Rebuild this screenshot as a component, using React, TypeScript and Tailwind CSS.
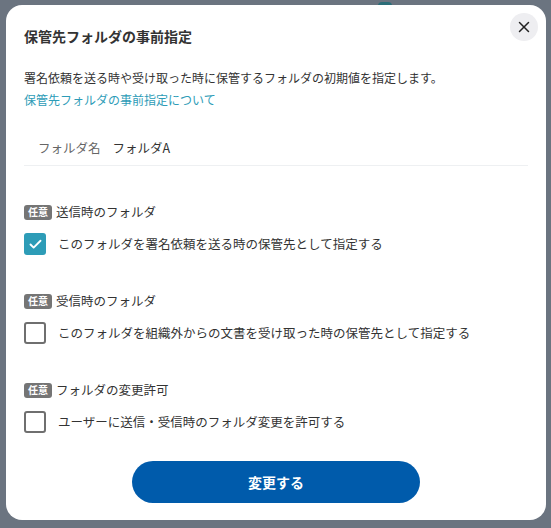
import { X, Check } from "lucide-react";

const font = { fontFamily: '"Noto Sans CJK JP", "Noto Sans", sans-serif' };

function Badge() {
  return (
    <span className="inline-flex items-center justify-center h-[15px] w-[28px] rounded-[3px] bg-[#757575] text-white text-[10px] font-bold leading-none">
      任意
    </span>
  );
}

function Option({ label, text, checked, className }: { label: string; text: string; checked?: boolean; className?: string }) {
  return (
    <div className={className}>
      <div className="flex items-center gap-[4px] h-[20px]">
        <Badge />
        <span className="text-[12.5px] text-[#333]">{label}</span>
      </div>
      <div className="flex items-center gap-[12px] mt-[11px] h-[22px]">
        {checked ? (
          <span className="w-[22px] h-[22px] rounded-[3px] bg-[#2d9cb7] flex items-center justify-center">
            <Check className="w-[15px] h-[15px] text-white" strokeWidth={3} />
          </span>
        ) : (
          <span className="w-[22px] h-[22px] rounded-[3px] border-2 border-[#6f6f6f] bg-white" />
        )}
        <span className="text-[12.5px] text-[#333]">{text}</span>
      </div>
    </div>
  );
}

export default function App() {
  return (
    <div className="relative w-[551px] h-[528px] bg-[#6b7480] pt-[5px] pl-[6px] overflow-hidden" style={font}>
      <div className="absolute left-[378px] top-[2px] w-[14px] h-[8px] rounded-full bg-[#2b6d78]" />
      <div className="relative w-[540px] h-[515px] bg-white rounded-[16px] px-[18px]">
        <button className="absolute right-[8px] top-[8px] w-[28px] h-[28px] rounded-full bg-[#eeeef1] flex items-center justify-center">
          <X className="w-[18px] h-[18px] text-[#222]" strokeWidth={2} />
        </button>
        <h2 className="pt-[19px] text-[14px] leading-[24px] font-semibold text-[#333]">保管先フォルダの事前指定</h2>
        <p className="mt-[19px] text-[12px] leading-[22px] text-[#333]">
          署名依頼を送る時や受け取った時に保管するフォルダの初期値を指定します。
          <br />
          <a className="text-[#2d9cb7]">保管先フォルダの事前指定について</a>
        </p>
        <div className="mt-[26px] flex items-center h-[22px] pl-[14px] text-[12.5px] gap-[12px]">
          <span className="text-[#666]">フォルダ名</span>
          <span className="text-[#333]">フォルダA</span>
        </div>
        <div className="mt-[6px] h-px bg-[#eef0f2] w-[504px]" />
        <Option className="mt-[36px]" label="送信時のフォルダ" text="このフォルダを署名依頼を送る時の保管先として指定する" checked />
        <Option className="mt-[36px]" label="受信時のフォルダ" text="このフォルダを組織外からの文書を受け取った時の保管先として指定する" />
        <Option className="mt-[36px]" label="フォルダの変更許可" text="ユーザーに送信・受信時のフォルダ変更を許可する" />
        <div className="mt-[28px] flex justify-center">
          <button className="w-[288px] h-[42px] rounded-full bg-[#005bab] text-white text-[14px] font-bold">変更する</button>
        </div>
      </div>
    </div>
  );
}
